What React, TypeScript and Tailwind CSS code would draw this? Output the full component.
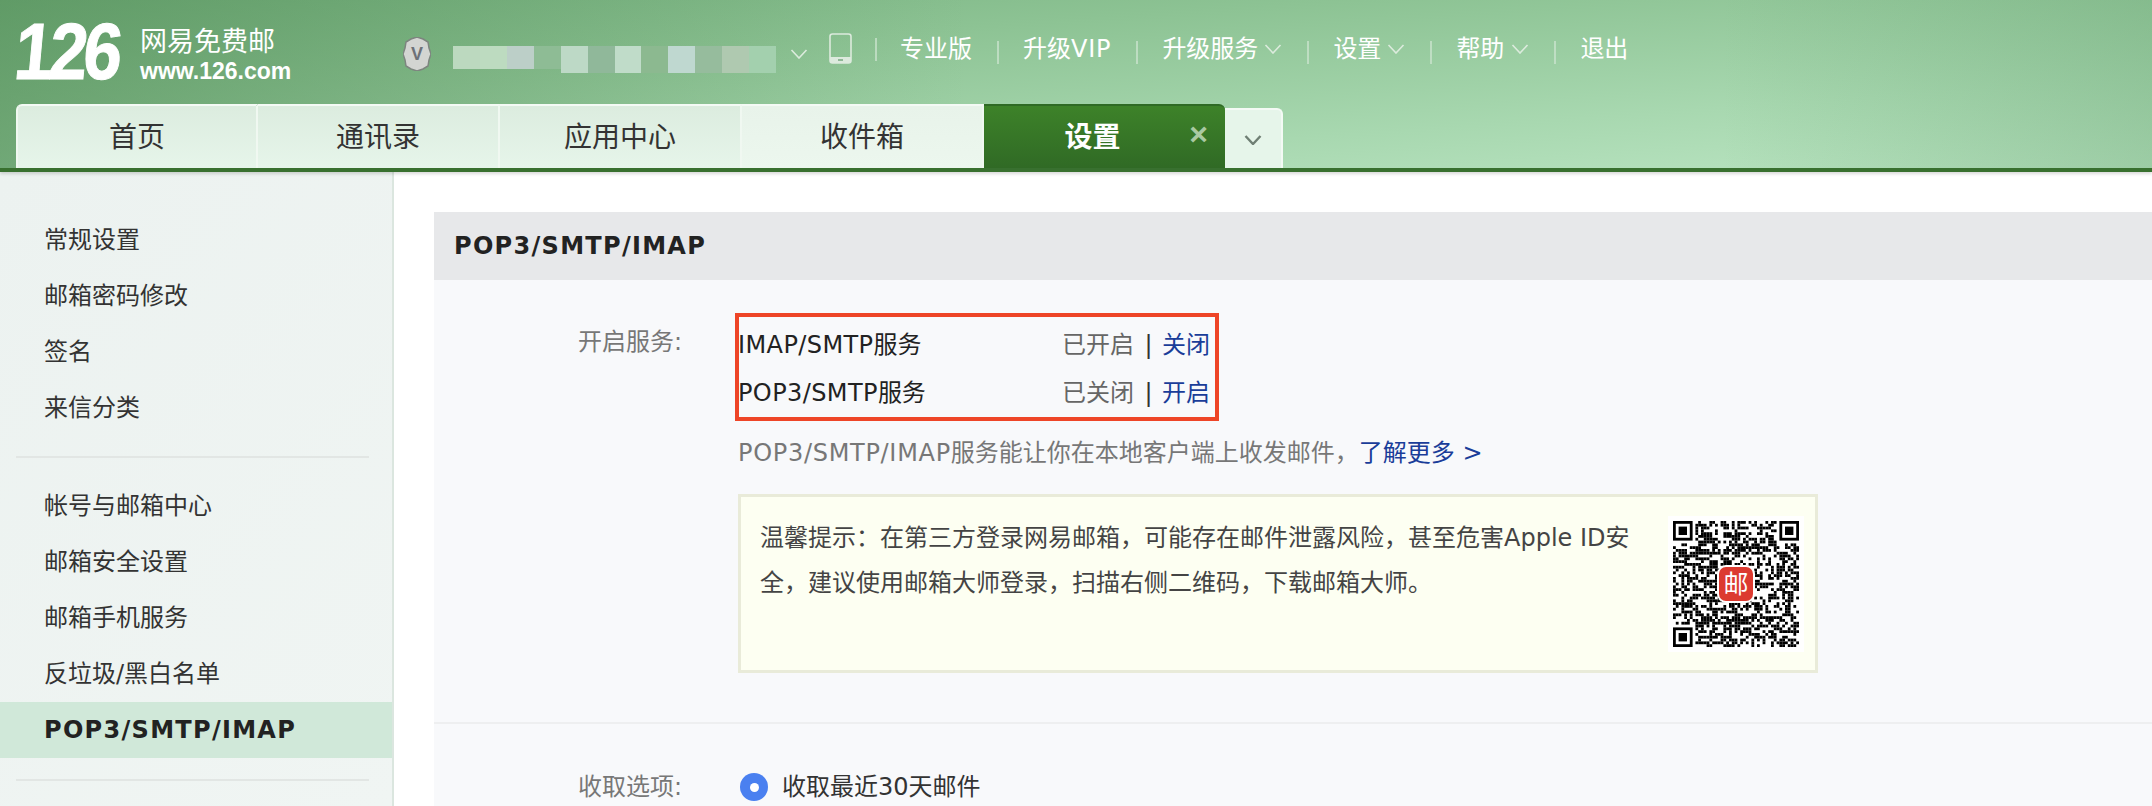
import React from 'react';

const sans = "font-['DejaVu_Sans','Noto_Sans_CJK_SC',sans-serif]";

const Chevron = ({ className = '' }: { className?: string }) => (
  <svg viewBox="0 0 18 10" fill="none" className={`h-[10px] w-[18px] ${className}`} stroke="currentColor" strokeWidth="1.6">
    <path d="M1.5 1 L9 9 L16.5 1" />
  </svg>
);

const Sep = () => <span className="mx-[24.5px] mt-[6px] h-[23px] w-[2px] bg-[#cfe6d2]/70" />;

const mosaicA = ['bg-[#bcd9bf]', 'bg-[#bddbc0]', 'bg-[#bccfc8]'];
const mosaicB = ['bg-[#bdd9c6]', 'bg-[#90b89a]', 'bg-[#c0dcc9]', 'bg-[#8cb990]', 'bg-[#bfd8d0]', 'bg-[#96bc9d]', 'bg-[#afc9b0]', 'bg-[#a3d0ae]'];

const tabs = ['首页', '通讯录', '应用中心', '收件箱'];
const group1 = ['常规设置', '邮箱密码修改', '签名', '来信分类'];
const group2 = ['帐号与邮箱中心', '邮箱安全设置', '邮箱手机服务', '反垃圾/黑白名单'];

// QR code modules, random but stable
const QR_SIZE = 45;
function qrCells() {
  const cells: [number, number][] = [];
  let seed = 126;
  const inFinder = (x: number, y: number) =>
    (x < 8 && y < 8) || (x >= QR_SIZE - 8 && y < 8) || (x < 8 && y >= QR_SIZE - 8);
  for (let y = 0; y < QR_SIZE; y++) {
    for (let x = 0; x < QR_SIZE; x++) {
      seed = (seed * 1103515245 + 12345) & 0x7fffffff;
      if (!inFinder(x, y) && (seed >> 16) % 100 < 52) cells.push([x, y]);
    }
  }
  return cells;
}

const Finder = ({ x, y }: { x: number; y: number }) => (
  <g>
    <rect x={x + 0.5} y={y + 0.5} width="6" height="6" fill="none" stroke="#000" strokeWidth="1" />
    <rect x={x + 2} y={y + 2} width="3" height="3" fill="#000" />
  </g>
);

const QrCode = () => (
  <div className="relative h-[136px] w-[136px] shrink-0 bg-white p-[5px]">
    <svg viewBox={`0 0 ${QR_SIZE} ${QR_SIZE}`} className="h-[126px] w-[126px]">
      {qrCells().map(([x, y]) => (
        <rect key={`${x}-${y}`} x={x} y={y} width="1" height="1" fill="#000" />
      ))}
      <Finder x={0} y={0} />
      <Finder x={QR_SIZE - 7} y={0} />
      <Finder x={0} y={QR_SIZE - 7} />
    </svg>
    <div className="absolute left-[49px] top-[49px] flex h-[38px] w-[38px] items-center justify-center rounded-[9px] border-2 border-white bg-[#dc3a30] text-[25px] leading-none text-white">
      邮
    </div>
  </div>
);

function Header() {
  return (
    <header className="relative z-10 h-[172px] shrink-0 border-b-4 border-[#38702f] bg-[linear-gradient(90deg,rgba(70,130,75,0.5)_0%,rgba(70,130,75,0)_45%,rgba(70,130,75,0)_80%,rgba(90,150,100,0.3)_100%),linear-gradient(176deg,#7ab482_0%,#8dc394_30%,#a8d8b0_72%,#b9e4c1_100%)] shadow-[0_2px_3px_rgba(0,0,0,0.15)]">
      <div className="relative flex h-[104px] items-center pl-[15px]">
        <span className="w-[118px] origin-left -skew-x-6 scale-x-[0.87] font-['Liberation_Sans',sans-serif] text-[80px] leading-none font-bold tracking-[-5px] text-white [-webkit-text-stroke:1px_white]">
          126
        </span>
        <div className="ml-[7px] flex w-[263px] flex-col pt-[5px] text-white">
          <span className={`text-[27px] leading-[32px] ${sans}`}>网易免费邮</span>
          <span className="font-['Liberation_Sans',sans-serif] text-[23px] leading-[26px] font-bold">www.126.com</span>
        </div>
        <svg viewBox="0 0 28 34" className="mt-[3px] h-[34px] w-[28px] shrink-0">
          <path d="M14 0 L20 2 L25 5 L26 11 L28 17 L26 23 L25 29 L20 32 L14 34 L8 32 L3 29 L2 23 L0 17 L2 11 L3 5 L8 2 Z" fill="#d3d5d2" stroke="#7d857f" strokeWidth="1.5" />
          <text x="14" y="23" textAnchor="middle" fontSize="18" fontWeight="700" fill="#6d7178" fontFamily="Liberation Sans, sans-serif">V</text>
        </svg>
        <div className="mt-[16px] ml-[22px] flex h-[28px] w-[323px] items-start">
          {mosaicA.map((c, i) => (
            <span key={i} className={`h-[23px] w-[27px] ${c}`} />
          ))}
          <span className="h-[23px] w-[27px] bg-[#8ebc95]" />
          {mosaicB.map((c, i) => (
            <span key={i} className={`h-[27px] w-[27px] ${c}`} />
          ))}
        </div>
        <Chevron className="mt-[4px] ml-[14px] text-[#dcebdd]" />
        <svg viewBox="0 0 23 31" className="-mt-[8px] ml-[21px] h-[31px] w-[23px] shrink-0" fill="none">
          <rect x="1" y="1" width="21" height="29" rx="2.5" stroke="#dceadd" strokeWidth="1.6" />
          <rect x="1" y="24" width="21" height="6" fill="#dceadd" />
          <rect x="9" y="26" width="5" height="2" fill="#8fb896" />
        </svg>
        <span className="mr-[23px] ml-[23px] -mt-[6px] h-[23px] w-[2px] bg-[#cfe6d2]/70" />
        <nav className={`-mt-[6px] flex items-center text-[24px] whitespace-nowrap text-white ${sans}`}>
          <span>专业版</span>
          <Sep />
          <span>升级<span className="tracking-[0.8px]">VIP</span></span>
          <Sep />
          <span>升级服务</span>
          <Chevron className="ml-[6px] text-[#dcebdd]" />
          <Sep />
          <span>设置</span>
          <Chevron className="ml-[6px] text-[#dcebdd]" />
          <Sep />
          <span>帮助</span>
          <Chevron className="ml-[7px] text-[#dcebdd]" />
          <Sep />
          <span>退出</span>
        </nav>
      </div>

      <div className="flex h-[64px] items-end pl-[16px] font-['Noto_Sans_CJK_SC',sans-serif] text-[28px]">
        {tabs.map((t, i) => (
          <div
            key={t}
            className={`flex h-[64px] w-[242px] items-center justify-center border-t-2 border-r-2 border-t-[#f4faf5] border-r-[#f0f8f1] bg-[linear-gradient(180deg,#dcecdf,#e6f5ea)] pb-[4px] text-[#333] ${i === 0 ? 'rounded-tl-[6px] border-l-2 border-l-[#f0f8f1]' : ''} ${i === 3 ? 'border-r-0 bg-[linear-gradient(180deg,#e8f3ea,#ecf7ee)]' : ''}`}
          >
            {t}
          </div>
        ))}
        <div className="relative flex h-[64px] w-[241px] items-center justify-center rounded-tr-[6px] border-t-2 border-[#2f6a25] bg-[linear-gradient(180deg,#3d8229,#306a25)] pr-[24px] pb-[4px] font-bold text-white">
          设置
          <span className="absolute top-[8px] right-[17px] font-['Liberation_Sans',sans-serif] text-[32px] leading-[40px] font-bold text-[#a9c9a2]">×</span>
        </div>
        <div className="flex h-[60px] w-[58px] items-center justify-center rounded-tr-[6px] border-t-2 border-r-2 border-[#f4faf5] bg-[#e6f5ea] text-[#6f7f74]">
          <Chevron className="mt-[2px] [stroke-width:2.4]" />
        </div>
      </div>
    </header>
  );
}

function Sidebar() {
  const item = 'flex h-[56px] items-center pl-[44px]';
  return (
    <aside className={`h-full w-[394px] shrink-0 border-r-2 border-[#dbe6df] bg-[linear-gradient(135deg,#ecf2f0,#f0f5f3)] pt-[40px] text-[24px] text-[#333] ${sans}`}>
      {group1.map((t) => (
        <div key={t} className={item}>{t}</div>
      ))}
      <div className="mt-[20px] mr-[23px] mb-[20px] ml-[16px] h-[2px] bg-[#e2e6e4]" />
      {group2.map((t) => (
        <div key={t} className={item}>{t}</div>
      ))}
      <div className={`${item} bg-[#d0e8d9] font-bold tracking-[1.3px] text-[#222]`}>POP3/SMTP/IMAP</div>
      <div className="mt-[21px] mr-[23px] ml-[16px] h-[2px] bg-[#e2e6e4]" />
    </aside>
  );
}

const Service = ({ name, status, action }: { name: string; status: string; action: string }) => (
  <div className="flex h-[48px] items-center">
    <span className="-ml-[1px] w-[324px]">
      <span className="tracking-[0.4px] text-[#222]">{name}</span>
      <span className="text-[#222]">服务</span>
    </span>
    <span className="w-[73px] whitespace-nowrap text-[#666]">{status}</span>
    <span className="w-[27px] text-center text-[#333]">|</span>
    <span className="text-[#1a3d99]">{action}</span>
  </div>
);

function Settings() {
  return (
    <section className={`mt-[40px] ml-[40px] min-w-0 flex-1 rounded-tl-[6px] bg-[#f8f9fb] text-[24px] ${sans}`}>
      <div className="flex h-[68px] items-center bg-[#e7e8ea] pl-[20px] font-bold tracking-[1.3px] text-[#222]">POP3/SMTP/IMAP</div>

      <div className="flex pt-[33px]">
        <div className="w-[304px] shrink-0 pt-[11px] pl-[144px] whitespace-nowrap text-[#777]">开启服务:</div>
        <div className="w-[1080px]">
          <div className="-ml-[3px] h-[108px] w-[484px] border-4 border-[#ee4527] pt-[4px]">
            <Service name="IMAP/SMTP" status="已开启" action="关闭" />
            <Service name="POP3/SMTP" status="已关闭" action="开启" />
          </div>
          <p className="mt-[12px] h-[40px] leading-[40px] whitespace-nowrap text-[#777]">
            <span className="tracking-[0.7px]">POP3/SMTP/IMAP</span>服务能让你在本地客户端上收发邮件，<span className="text-[#1a3d99]">了解更多 &gt;</span>
          </p>
          <div className="mt-[21px] flex h-[179px] justify-between border-[3px] border-[#e9ebd9] bg-[#fdfff2] pt-[19px] pr-[11px] pl-[19px] text-[#444]">
            <p className="w-[880px] leading-[45px]">
              温馨提示：在第三方登录网易邮箱，可能存在邮件泄露风险，甚至危害Apple ID安全，建议使用邮箱大师登录，扫描右侧二维码，下载邮箱大师。
            </p>
            <QrCode />
          </div>
        </div>
      </div>

      <div className="mt-[49px] h-[2px] bg-[#eeeff0]" />

      <div className="flex pt-[49px]">
        <div className="w-[304px] shrink-0 pl-[144px] leading-[28px] whitespace-nowrap text-[#777]">收取选项:</div>
        <div className="flex items-center leading-[28px] text-[#333]">
          <span className="ml-[2px] flex h-[28px] w-[28px] items-center justify-center rounded-full bg-[#4a80f0]">
            <span className="h-[9px] w-[9px] rounded-full bg-white" />
          </span>
          <span className="ml-[14px]">收取最近30天邮件</span>
        </div>
      </div>
    </section>
  );
}

export default function App() {
  return (
    <div className="flex h-[806px] flex-col overflow-hidden bg-white">
      <Header />
      <div className="flex min-h-0 flex-1">
        <Sidebar />
        <Settings />
      </div>
    </div>
  );
}
